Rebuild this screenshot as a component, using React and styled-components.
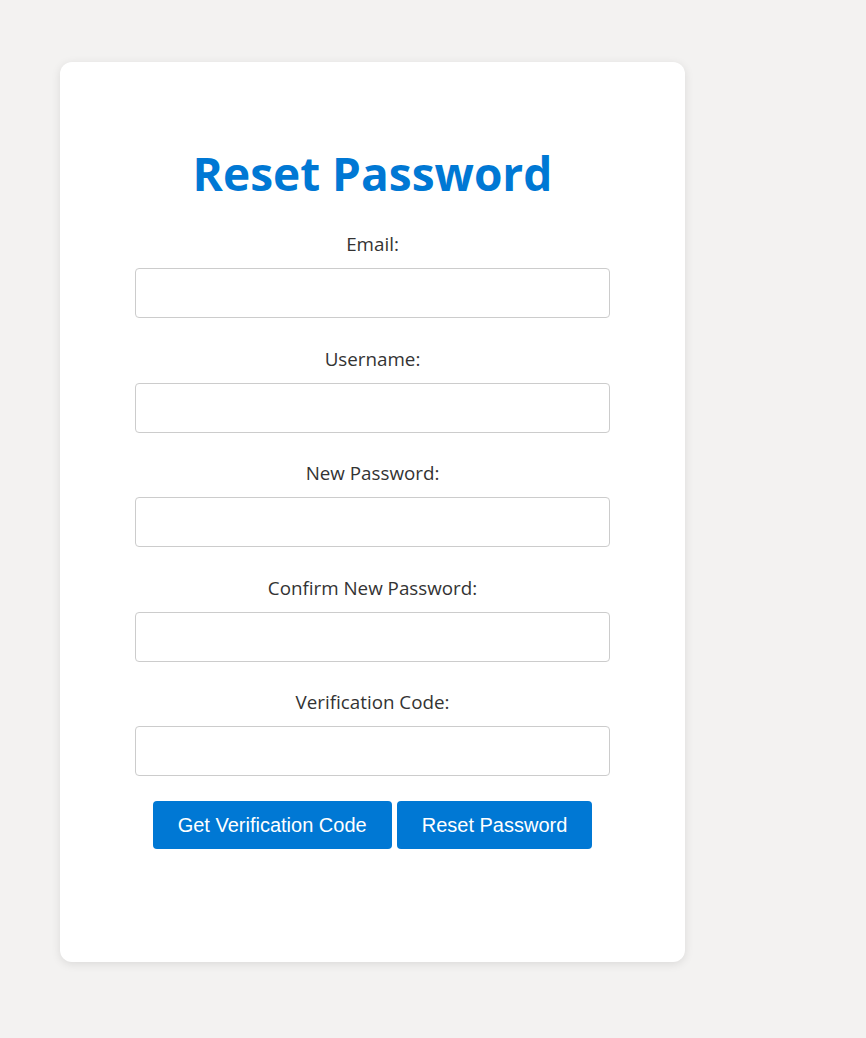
import React from "react";
import styled, { createGlobalStyle } from "styled-components";

const GlobalStyle = createGlobalStyle`
  body {
    margin: 0;
    background-color: #f3f2f1;
    font-family: "Open Sans", "Noto Sans", sans-serif;
  }
`;

const Page = styled.div`
  min-height: 100vh;
  padding: 62px 0 0 60px;
  box-sizing: border-box;
`;

const Card = styled.div`
  width: 625px;
  height: 900px;
  box-sizing: border-box;
  padding: 82px 75px 0;
  background-color: #ffffff;
  border-radius: 12px;
  box-shadow: 0 2px 10px rgba(0, 0, 0, 0.1);
`;

const Title = styled.h1`
  margin: 0 0 30px;
  text-align: center;
  color: #0078d4;
  font-size: 46px;
  line-height: 58px;
  font-weight: 700;
`;

const Form = styled.form`
  display: flex;
  flex-direction: column;
`;

const Field = styled.div`
  display: flex;
  flex-direction: column;
  margin-bottom: 28.5px;
`;

const Label = styled.label`
  display: block;
  text-align: center;
  color: #333333;
  font-size: 18.8px;
  line-height: 24px;
  margin-bottom: 12px;
`;

const Input = styled.input`
  width: 100%;
  height: 50px;
  box-sizing: border-box;
  border: 1px solid #cccccc;
  border-radius: 4px;
  padding: 0 10px;
  font-size: 16px;
`;

const BtnRow = styled.div`
  display: flex;
  justify-content: center;
  gap: 5px;
  margin-top: -3.5px;
`;

const Btn = styled.button`
  height: 48px;
  padding: 0 25px;
  border: none;
  border-radius: 4px;
  background-color: #0078d4;
  color: #ffffff;
  font-family: "Liberation Sans", Arial, sans-serif;
  font-size: 20px;
  cursor: pointer;
`;

const fields = [
  { id: "email", label: "Email:", type: "email" },
  { id: "username", label: "Username:", type: "text" },
  { id: "newPassword", label: "New Password:", type: "password" },
  { id: "confirmPassword", label: "Confirm New Password:", type: "password" },
  { id: "code", label: "Verification Code:", type: "text" },
];

const App = () => {
  const handleSubmit = (e) => {
    e.preventDefault();
  };

  return (
    <>
      <GlobalStyle />
      <Page>
        <Card>
          <Title>Reset Password</Title>
          <Form onSubmit={handleSubmit}>
            {fields.map((f) => (
              <Field key={f.id}>
                <Label htmlFor={f.id}>{f.label}</Label>
                <Input id={f.id} type={f.type} />
              </Field>
            ))}
            <BtnRow>
              <Btn type="button">Get Verification Code</Btn>
              <Btn type="submit">Reset Password</Btn>
            </BtnRow>
          </Form>
        </Card>
      </Page>
    </>
  );
};

export default App;
